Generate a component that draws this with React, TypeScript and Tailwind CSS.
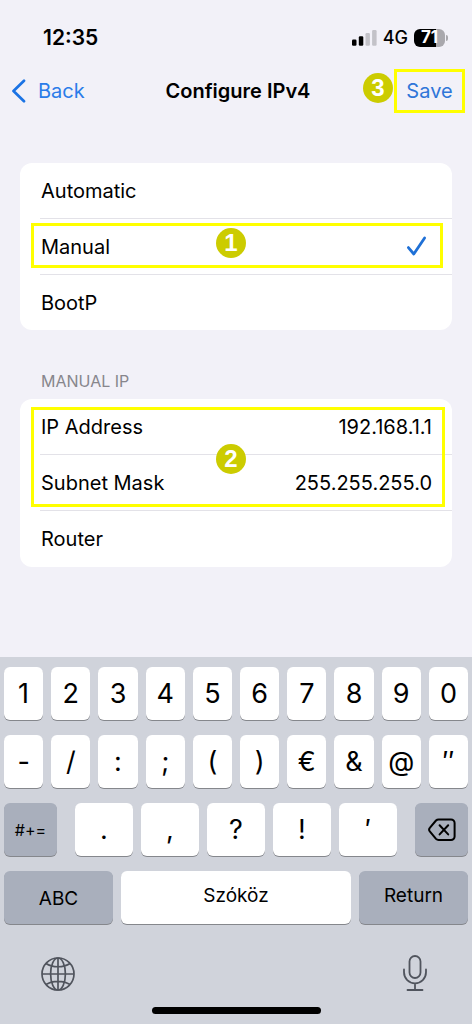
import React, { useState } from "react";

const configModes = ["Automatic", "Manual", "BootP"];

const initialFields = [
  { id: "ip-address", label: "IP Address", value: "192.168.1.1" },
  { id: "subnet-mask", label: "Subnet Mask", value: "255.255.255.0" },
  { id: "router", label: "Router", value: "" },
];

const digitKeys = ["1", "2", "3", "4", "5", "6", "7", "8", "9", "0"];
const symbolKeys = ["-", "/", ":", ";", "(", ")", "€", "&", "@", "″"];
const punctuationKeys = [".", ",", "?", "!", "′"];

interface KeyProps {
  children: React.ReactNode;
  className?: string;
  label?: string;
}

const Key: React.FC<KeyProps> = ({ children, className = "", label }) => (
  <button
    type="button"
    aria-label={label}
    className={`flex h-[53px] items-center justify-center rounded-md shadow-[0_1px_0_#85878c] ${className}`}
  >
    {children}
  </button>
);

const StepBadge: React.FC<{ step: number; className?: string }> = ({
  step,
  className = "",
}) => (
  <span
    className={`flex size-[30px] items-center justify-center rounded-full bg-[#cccc00] font-['Liberation_Sans',sans-serif] text-2xl leading-none font-bold text-white ${className}`}
  >
    {step}
  </span>
);

const StatusBar: React.FC = () => (
  <header className="flex h-[69px] items-center justify-between pt-1.5 pr-6 pl-[43px]">
    <span className="text-[21px] font-semibold">12:35</span>
    <div className="flex items-center gap-1.5">
      <svg width="25" height="16" viewBox="0 0 25 16" aria-hidden="true">
        <rect x="0" y="9.5" width="4.5" height="6.2" rx="1.2" />
        <rect x="6.8" y="6.2" width="4.5" height="9.5" rx="1.2" />
        <rect x="13.5" y="3" width="4.4" height="12.7" rx="1.2" fill="#c3c2c8" />
        <rect x="20.1" y="0" width="4.5" height="15.7" rx="1.2" fill="#c3c2c8" />
      </svg>
      <span className="text-lg font-medium">4G</span>
      <div className="flex items-center gap-px">
        <span className="flex h-[18px] w-[31px] items-center justify-center rounded-md bg-linear-to-r from-black from-72% to-[#a9a8ad] to-72% text-[17px] leading-none font-bold text-white">
          71
        </span>
        <span className="h-1.5 w-0.5 rounded-r-full bg-[#a9a8ad]" />
      </div>
    </div>
  </header>
);

const NavBar: React.FC = () => (
  <nav className="grid h-11 grid-cols-[1fr_auto_1fr] items-center pr-[7px] pl-[11px]">
    <a href="#" className="flex items-center gap-3 text-xl text-[#2b7ce9]">
      <svg width="15" height="24" viewBox="0 0 15 24" fill="none" aria-hidden="true">
        <path
          d="M13 1.7 2.5 12 13 22.3"
          stroke="#1b73e4"
          strokeWidth="2.7"
          strokeLinecap="round"
          strokeLinejoin="round"
        />
      </svg>
      Back
    </a>
    <h1 className="text-xl font-semibold">Configure IPv4</h1>
    <div className="flex justify-end">
      <div className="relative">
        <button
          type="button"
          className="h-11 w-[71px] border-3 border-[#ffff00] text-xl text-[#2f76d8]"
        >
          Save
        </button>
        <StepBadge step={3} className="absolute top-1 right-full mr-px" />
      </div>
    </div>
  </nav>
);

export default function App() {
  const [mode, setMode] = useState("Manual");
  const [fields, setFields] = useState(initialFields);

  const updateField = (id: string, value: string) => {
    setFields(fields.map((f) => (f.id === id ? { ...f, value } : f)));
  };

  return (
    <div className="flex min-h-screen flex-col bg-[#f2f1f8] font-[Inter,sans-serif] text-black">
      <StatusBar />
      <NavBar />

      <main className="px-5 pt-[50px] text-xl">
        {/* Mode */}
        <div
          role="radiogroup"
          aria-label="Configure IPv4"
          className="divide-y divide-[#e3e2e8] rounded-xl bg-white pl-5"
        >
          {configModes.map((name) => (
            <div key={name} className="relative">
              <label className="flex h-[55px] items-center justify-between pr-6 pl-px">
                {name}
                <input
                  type="radio"
                  name="mode"
                  value={name}
                  checked={mode === name}
                  onChange={() => setMode(name)}
                  className="peer sr-only"
                />
                <svg
                  width="22"
                  height="22"
                  viewBox="0 0 22 22"
                  fill="none"
                  className="hidden peer-checked:block"
                  aria-hidden="true"
                >
                  <path
                    d="M2.4 11.6 7.8 18 18.6 2"
                    stroke="#1f70d6"
                    strokeWidth="2.8"
                    strokeLinecap="round"
                    strokeLinejoin="round"
                  />
                </svg>
              </label>
              {name === "Manual" && (
                <div className="pointer-events-none absolute top-1 right-[9px] -left-[9px] h-[45px] border-3 border-[#ffff00]">
                  <StepBadge step={1} className="absolute top-0.5 left-[182px]" />
                </div>
              )}
            </div>
          ))}
        </div>

        {/* Addresses */}
        <h2 className="mt-[41px] mb-2 pl-[21px] text-base leading-5 text-[#87868c]">
          MANUAL IP
        </h2>
        <div className="relative rounded-xl bg-white pl-5">
          <div className="divide-y divide-[#e3e2e8]">
            {fields.map((field) => (
              <div key={field.id} className="flex h-14 items-center pr-5 pl-px">
                <label htmlFor={field.id} className="shrink-0">
                  {field.label}
                </label>
                <input
                  id={field.id}
                  type="text"
                  value={field.value}
                  onChange={(e) => updateField(field.id, e.target.value)}
                  className="min-w-0 flex-1 bg-transparent text-right outline-none"
                />
              </div>
            ))}
          </div>
          <div className="pointer-events-none absolute top-2 right-[7px] left-[11px] h-[100px] border-3 border-[#ffff00]">
            <StepBadge step={2} className="absolute top-[34px] left-[182px]" />
          </div>
        </div>
      </main>

      {/* Keyboard */}
      <section className="mt-auto bg-[#d0d3db] px-1 py-2.5">
        <div className="flex flex-col gap-[15px]">
          <div className="flex gap-2">
            {digitKeys.map((k) => (
              <Key key={k} className="flex-1 bg-white pt-0.5 text-[27px]">
                {k}
              </Key>
            ))}
          </div>
          <div className="flex gap-2">
            {symbolKeys.map((k) => (
              <Key key={k} className="flex-1 bg-white pt-0.5 text-[27px]">
                {k}
              </Key>
            ))}
          </div>
          <div className="flex gap-[18px]">
            <Key className="w-[53px] bg-[#a9afbc] text-base">#+=</Key>
            <div className="flex flex-1 gap-2">
              {punctuationKeys.map((k) => (
                <Key key={k} className="flex-1 bg-white pt-0.5 text-[27px]">
                  {k}
                </Key>
              ))}
            </div>
            <Key className="w-[53px] bg-[#a9afbc]" label="Delete">
              <svg width="28" height="24" viewBox="0 0 28 24" fill="none" stroke="black" aria-hidden="true">
                <path
                  d="M10.6 1.4H23a3.6 3.6 0 0 1 3.6 3.6v13.4a3.6 3.6 0 0 1-3.6 3.6H10.6a3.6 3.6 0 0 1-2.6-1.1l-6-7.2a3 3 0 0 1 0-4l6-7.2a3.6 3.6 0 0 1 2.6-1.1Z"
                  strokeWidth="2"
                  strokeLinejoin="round"
                />
                <path d="m11.6 7.2 8.6 9.2M20.2 7.2l-8.6 9.2" strokeWidth="2" strokeLinecap="round" />
              </svg>
            </Key>
          </div>
          <div className="flex gap-2">
            <Key className="w-[109px] bg-[#a9afbc] pt-1 text-[19px]">ABC</Key>
            <Key className="flex-1 bg-white pb-0.5 text-[19px]">Szóköz</Key>
            <Key className="w-[109px] bg-[#a9afbc] pb-0.5 text-[19px]">Return</Key>
          </div>
        </div>

        <div className="mt-[17px] flex h-[66px] items-center justify-between pr-10 pl-[37px]">
          <button type="button" aria-label="Next keyboard">
            <svg width="34" height="34" viewBox="0 0 34 34" fill="none" stroke="#50545d" strokeWidth="1.7" aria-hidden="true">
              <circle cx="17" cy="17" r="16" />
              <ellipse cx="17" cy="17" rx="7.4" ry="16" />
              <path d="M17 1v32M1 17h32M5 6.5c6.5 4.3 17.5 4.3 24 0M5 27.5c6.5-4.3 17.5-4.3 24 0" />
            </svg>
          </button>
          <button type="button" aria-label="Dictate">
            <svg width="26" height="38" viewBox="0 0 26 38" fill="none" stroke="#50545d" strokeWidth="1.8" strokeLinecap="round" aria-hidden="true">
              <rect x="7.5" y="1" width="11" height="22" rx="5.5" />
              <path d="M2 14.5v2.8a11 11 0 0 0 22 0v-2.8M13 28.5v6.5M5.5 35h15" />
            </svg>
          </button>
        </div>

        <div className="mx-auto h-[7px] w-[169px] rounded-full bg-black" />
      </section>
    </div>
  );
}
